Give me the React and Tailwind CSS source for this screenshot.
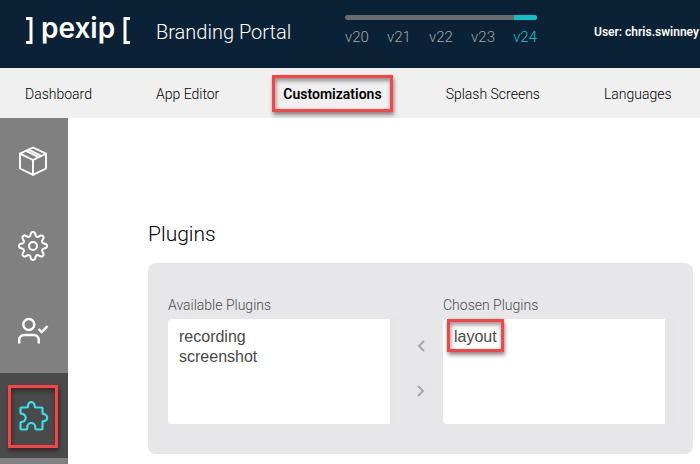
const versions = ["v20", "v21", "v22", "v23", "v24"];
const tabs = ["Dashboard", "App Editor", "Customizations", "Splash Screens", "Languages"];

const line = {
  width: 32,
  height: 32,
  viewBox: "0 0 32 32",
  fill: "none",
  stroke: "currentColor",
  strokeWidth: 2,
  strokeLinecap: "round",
  strokeLinejoin: "round",
  "aria-hidden": true,
};

function BoxIcon() {
  return (
    <svg {...line} strokeWidth={1.9}>
      <path d="M16 2.500 29 8.700v14.800L16 29.800 3 23.500V8.700z" />
      <path d="M3 8.700l13 6.300L29 8.700M16 15v14.800M9.200 5.800l12.300 6.300" />
      <path d="M11.800 4.600 24 10.800" />
    </svg>
  );
}

function gearPath() {
  const n = 96;
  let d = "";
  for (let i = 0; i < n; i++) {
    const a = (i / n) * Math.PI * 2;
    const wave = Math.tanh(1.5 * Math.cos(8 * a)) / Math.tanh(1.5);
    const r = 12 + 2 * wave;
    d += `${i ? "L" : "M"}${(16 + r * Math.sin(a)).toFixed(2)} ${(16 - r * Math.cos(a)).toFixed(2)}`;
  }
  return d + "Z";
}

function GearIcon() {
  return (
    <svg {...line}>
      <path d={gearPath()} />
      <circle cx="16" cy="16" r="4" />
    </svg>
  );
}

function UserIcon() {
  return (
    <svg {...line} strokeWidth={2.4} strokeLinecap="butt">
      <circle cx="11.800" cy="9.500" r="5.500" />
      <path d="M2.200 28.500V25a5 5 0 0 1 5-5h9.500a5 5 0 0 1 5 5v3.500M21.500 14l3.200 3.200 5.800-6" />
    </svg>
  );
}

function PuzzleIcon() {
  return (
    <svg {...line} strokeWidth={2.2}>
      <path d="M4.500 7.500h5.300q1.200 0 1.200-1.200V5.500a3.300 3.300 0 0 1 6.600 0v.8q0 1.200 1.200 1.200H24.500q1 0 1 1V13q0 1.200 1.200 1.200a3.500 3.500 0 0 1 0 7Q25.500 21.200 25.500 22.400V28.500q0 1-1 1H19.500q-1.200 0-1.200-1.200V27a4 4 0 0 0-8 0v1.300q0 1.200-1.200 1.200H4.500q-1 0-1-1V23q0-1.200 1.200-1.200a4 4 0 0 0 0-8Q3.500 13.800 3.500 12.600V8.500q0-1 1-1z" />
    </svg>
  );
}

const sections = [
  { name: "Packages", Icon: BoxIcon },
  { name: "Settings", Icon: GearIcon },
  { name: "Users", Icon: UserIcon },
  { name: "Plugins", Icon: PuzzleIcon, active: true },
];

function Highlight({ className }) {
  return (
    <span
      className={`pointer-events-none absolute border-3 border-[#ff4142] shadow-[1px_3px_4px_rgba(0,0,0,0.45),inset_1px_3px_4px_rgba(0,0,0,0.4)] ${className}`}
    />
  );
}

function Logo() {
  return (
    <a href="#home" aria-label="pexip" className="flex w-[131px] items-center gap-2 text-white">
      <svg width="8" height="27" viewBox="0 0 8 27" fill="none" stroke="currentColor" strokeWidth="3" aria-hidden="true">
        <path d="M1 1.500h5v24H1" />
      </svg>
      <span className="-mt-1 font-[Inter,sans-serif] text-[28px] leading-9 font-semibold">pexip</span>
      <svg width="8" height="27" viewBox="0 0 8 27" fill="none" stroke="currentColor" strokeWidth="3" aria-hidden="true">
        <path d="M7 1.500H2v24h5" />
      </svg>
    </a>
  );
}

function PluginList({ id, label, items, highlighted }) {
  return (
    <div className="relative flex min-w-0 flex-1 flex-col">
      <label htmlFor={id} className="mb-1 text-sm text-[#4a4a4a]">
        {label}
      </label>
      <select
        id={id}
        multiple
        className="h-[105px] appearance-none overflow-hidden rounded-l border-r-8 border-[#e6e6e6] bg-white px-[9px] pt-[9px] font-['Liberation_Sans',Arial,sans-serif] text-base leading-5 text-[#4a4a4a] outline-none"
      >
        {items.map((item) => (
          <option key={item} className="h-5 px-[2px] py-0 leading-5">
            {item}
          </option>
        ))}
      </select>
      {highlighted && <Highlight className="top-6 left-1 h-[33px] w-[57px]" />}
    </div>
  );
}

function Chevron({ d }) {
  return (
    <svg width="8" height="12" viewBox="0 0 8 12" fill="none" stroke="currentColor" strokeWidth="2" aria-hidden="true">
      <path d={d} />
    </svg>
  );
}

export default function App() {
  return (
    <div className="flex min-h-screen flex-col overflow-hidden bg-white font-[Roboto,sans-serif] font-light text-black">
      <header className="flex h-[68px] bg-[#0b2135] pl-[25px] whitespace-nowrap">
        <div className="-mt-2 flex items-center">
          <Logo />
        </div>
        <div className="flex w-[189px] shrink-0 items-center pb-1 text-xl text-white">Branding Portal</div>
        <div className="w-48 shrink-0 pt-[15px]">
          <div className="flex h-[5px] justify-end overflow-hidden rounded-full bg-[#6b6b6b]">
            <div className="w-[23px] bg-[#0fbfc9]" />
          </div>
          <div className="mt-[7px] flex justify-between text-[15px] leading-5">
            {versions.map((v) => (
              <button key={v} className={v === "v24" ? "text-[#0fc9d3]" : "text-[#a3a7ab]"}>
                {v}
              </button>
            ))}
          </div>
        </div>
        <div className="ml-[57px] flex shrink-0 items-center pb-1 text-xs font-semibold text-white">
          User: chris.swinney
        </div>
      </header>

      <nav className="flex h-[50px] items-center gap-16 bg-[#f0f0f0] pt-0.5 pl-[25px] text-sm whitespace-nowrap">
        {tabs.map((tab) => (
          <a key={tab} href="#tab" className={tab === "Customizations" ? "relative font-semibold" : ""}>
            {tab}
            {tab === "Customizations" && <Highlight className="-inset-x-[11px] -top-[9px] -bottom-2" />}
          </a>
        ))}
      </nav>

      <div className="flex flex-1">
        <aside className="w-[68px] shrink-0 bg-[#808080]">
          {sections.map(({ name, Icon, active }) => (
            <button
              key={name}
              aria-label={name}
              className={`relative flex h-[85px] w-full items-center justify-center pr-0.5 ${
                active ? "bg-[#4a4a4a] text-[#3be0e8]" : "text-white"
              }`}
            >
              <Icon />
              {active && <Highlight className="top-3 right-2.5 bottom-2.5 left-2" />}
            </button>
          ))}
        </aside>

        <main className="min-w-0 flex-1 pt-[100px] pr-[7px] pl-20">
          <h1 className="text-[21px] leading-8">Plugins</h1>
          <section className="mt-[13px] flex rounded-lg bg-[#e7e7e9] px-5 pt-8 pb-[30px]">
            <PluginList id="available" label="Available Plugins" items={["recording", "screenshot"]} />
            <div className="flex w-[45px] flex-col items-center gap-[33px] pt-[45px] text-[#a6a6a8]">
              <button aria-label="Remove plugin">
                <Chevron d="M7 1 2 6l5 5" />
              </button>
              <button aria-label="Add plugin">
                <Chevron d="M1 1l5 5-5 5" />
              </button>
            </div>
            <PluginList id="chosen" label="Chosen Plugins" items={["layout"]} highlighted />
          </section>
        </main>
      </div>
    </div>
  );
}
